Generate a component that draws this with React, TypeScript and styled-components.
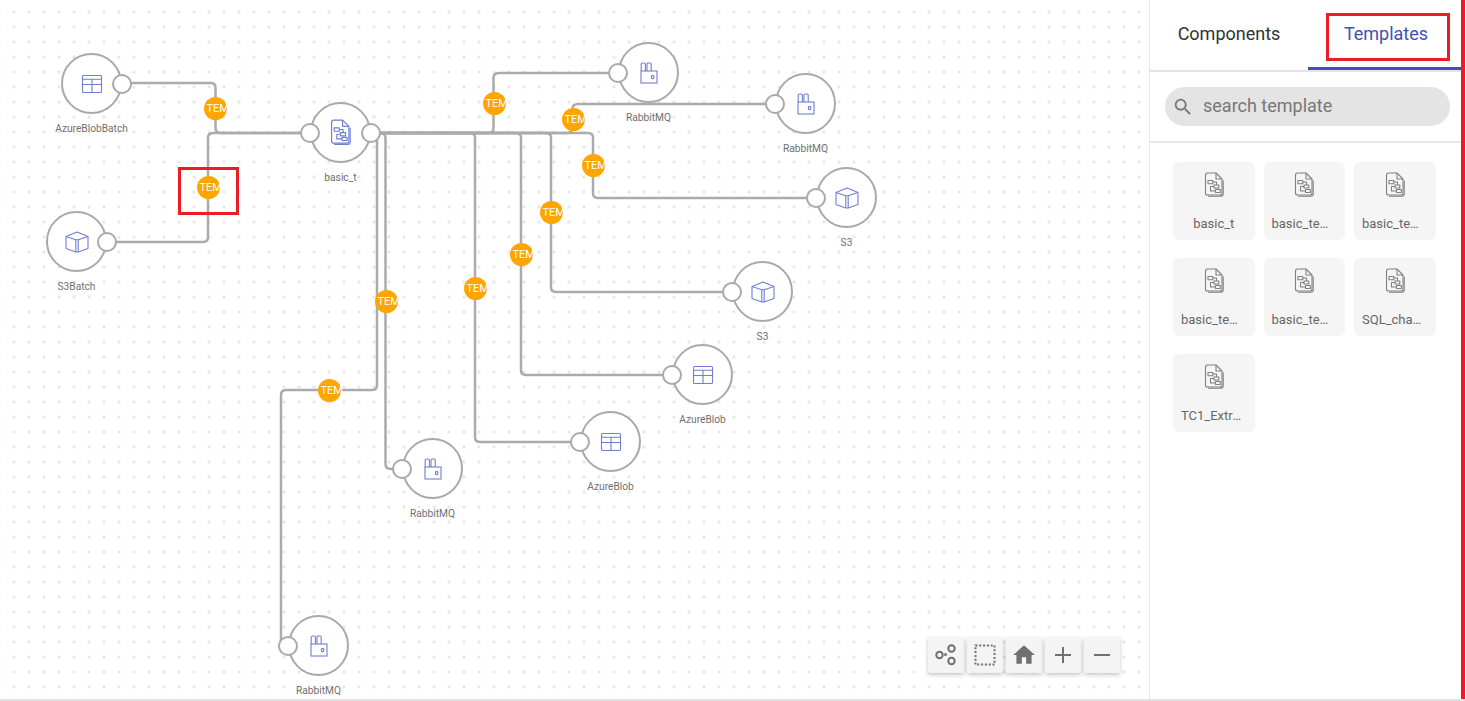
import React from 'react';
import styled, { createGlobalStyle } from 'styled-components';

type NodeKind = 'table' | 'cube' | 'rabbit' | 'flow';

interface FlowNode {
  x: number;
  y: number;
  label: string;
  kind: NodeKind;
  port: 'in' | 'out' | 'both';
}

const NODES: FlowNode[] = [
  { x: 91, y: 84, label: 'AzureBlobBatch', kind: 'table', port: 'out' },
  { x: 76, y: 242, label: 'S3Batch', kind: 'cube', port: 'out' },
  { x: 340, y: 133, label: 'basic_t', kind: 'flow', port: 'both' },
  { x: 648, y: 73, label: 'RabbitMQ', kind: 'rabbit', port: 'in' },
  { x: 805, y: 104, label: 'RabbitMQ', kind: 'rabbit', port: 'in' },
  { x: 846, y: 198, label: 'S3', kind: 'cube', port: 'in' },
  { x: 762, y: 292, label: 'S3', kind: 'cube', port: 'in' },
  { x: 702, y: 375, label: 'AzureBlob', kind: 'table', port: 'in' },
  { x: 610, y: 442, label: 'AzureBlob', kind: 'table', port: 'in' },
  { x: 432, y: 469, label: 'RabbitMQ', kind: 'rabbit', port: 'in' },
  { x: 318, y: 646, label: 'RabbitMQ', kind: 'rabbit', port: 'in' },
];

const EDGES = [
  'M121 83 H211 Q215.5 83 215.5 88 V128 Q215.5 133 221 133 H310',
  'M106 242 H203 Q208 242 208 237 V138 Q208 133 213 133 H310',
  'M370 133 H488 Q493.5 133 493.5 128 V78 Q493.5 73 499 73 H618',
  'M370 133 H567 Q572.5 133 572.5 128 V109 Q572.5 104 578 104 H775',
  'M370 133 H588 Q593 133 593 138 V193 Q593 198 598 198 H816',
  'M370 133 H546 Q551 133 551 138 V287 Q551 292 556 292 H732',
  'M370 133 H516 Q521 133 521 138 V370 Q521 375 526 375 H672',
  'M370 133 H470 Q475 133 475 138 V437 Q475 442 480 442 H580',
  'M370 133 H380 Q385.5 133 385.5 138 V464 Q385.5 469 391 469 H402',
  'M370 133 Q377 133 377 138 V385 Q377 390 372 390 H286 Q281 390 281 395 V641 Q281 646 286 646 H288',
];

const BADGES = [
  [215, 108],
  [208, 187],
  [494, 103],
  [573, 119],
  [593, 165],
  [551, 212],
  [521, 254],
  [475, 288],
  [386, 301],
  [329, 390],
];

const TEMPLATES = ['basic_t', 'basic_temp1', 'basic_temp2', 'basic_temp3', 'basic_temp4', 'SQL_change', 'TC1_Extract'];

const GlobalStyle = createGlobalStyle`
  html, body {
    margin: 0;
    padding: 0;
    height: 100%;
    overflow: hidden;
    background: #fff;
    font-family: Roboto, "Liberation Sans", sans-serif;
  }
`;

const Page = styled.div`
  display: flex;
  width: 1465px;
  height: 701px;
  box-sizing: border-box;
  border-bottom: 2px solid #e3e3e3;
  overflow: hidden;
`;

const Canvas = styled.div`
  position: relative;
  flex: 1;
  background-color: #fff;
  background-image: radial-gradient(circle at center, #e4e4e4 1.3px, transparent 1.6px);
  background-size: 15px 15px;
  background-position: 6.5px 4.5px;
`;

const EdgeLayer = styled.svg`
  position: absolute;
  left: 0;
  top: 0;
  width: 100%;
  height: 100%;
`;

const NodeWrap = styled.div<{ $x: number; $y: number }>`
  position: absolute;
  left: ${(p) => p.$x - 50}px;
  top: ${(p) => p.$y - 31}px;
  width: 101px;
  display: flex;
  flex-direction: column;
  align-items: center;
`;

const Circle = styled.div`
  position: relative;
  box-sizing: border-box;
  width: 61px;
  height: 61px;
  border: 2.5px solid #a9a9a9;
  border-radius: 50%;
  background: #fff;
  display: flex;
  align-items: center;
  justify-content: center;
`;

const Port = styled.span<{ $side: 'in' | 'out' }>`
  position: absolute;
  top: 50%;
  ${(p) => (p.$side === 'in' ? 'left: -12px;' : 'right: -12px;')}
  box-sizing: border-box;
  width: 20px;
  height: 20px;
  margin-top: -10px;
  border: 2.5px solid #a9a9a9;
  border-radius: 50%;
  background: #fff;
`;

const NodeLabel = styled.span`
  margin-top: 8px;
  font-size: 10.2px;
  line-height: 14px;
  color: #707070;
  white-space: nowrap;
`;

const Badge = styled.div<{ $x: number; $y: number }>`
  position: absolute;
  left: ${(p) => p.$x - 11.5}px;
  top: ${(p) => p.$y - 11.5}px;
  width: 23px;
  height: 23px;
  border-radius: 50%;
  background: #ffa500;
  color: #fff;
  font-size: 11px;
  line-height: 23px;
  padding-left: 3px;
  box-sizing: border-box;
  white-space: nowrap;
`;

const Highlight = styled.div`
  position: absolute;
  left: 178px;
  top: 167px;
  width: 61px;
  height: 48px;
  box-sizing: border-box;
  border: 3px solid #ed1c24;
`;

const Toolbar = styled.div`
  position: absolute;
  right: 29px;
  bottom: 26px;
  display: flex;
  gap: 3px;
`;

const ToolButton = styled.button`
  width: 36px;
  height: 36px;
  padding: 0;
  border: 0;
  border-radius: 2px;
  background: #f4f4f4;
  box-shadow: 0 2px 4px rgba(0, 0, 0, 0.22);
  display: flex;
  align-items: center;
  justify-content: center;
`;

const Sidebar = styled.aside`
  width: 316px;
  box-sizing: border-box;
  border-left: 1px solid #e6e6e6;
  border-right: 4px solid #ed1c24;
  background: #fff;
  display: flex;
  flex-direction: column;
`;

const Tabs = styled.div`
  display: flex;
  height: 72px;
  box-sizing: border-box;
  border-bottom: 2px solid #e4e4e4;
`;

const Tab = styled.div<{ $active?: boolean }>`
  position: relative;
  flex: ${(p) => (p.$active ? '1' : '0 0 158px')};
  height: 70px;
  box-sizing: border-box;
  padding-left: ${(p) => (p.$active ? '3px' : '0')};
  display: flex;
  align-items: center;
  justify-content: center;
  font-size: 18px;
  color: ${(p) => (p.$active ? '#3f51b5' : '#333')};
  border-bottom: 3px solid ${(p) => (p.$active ? '#3f51b5' : 'transparent')};
`;

const TabHighlight = styled.div`
  position: absolute;
  left: 18px;
  top: 13px;
  width: 124px;
  height: 48px;
  box-sizing: border-box;
  border: 3px solid #ed1c24;
`;

const SearchRow = styled.div`
  padding: 15px 11px 15px 15px;
  border-bottom: 2px solid #e8e8e8;
`;

const SearchBox = styled.div`
  height: 39px;
  border-radius: 20px;
  background: #e4e4e4;
  display: flex;
  align-items: center;
  padding-left: 7px;
  gap: 9px;
`;

const SearchIcon = styled.svg`
  margin-top: 1px;
`;

const SearchText = styled.span`
  margin-bottom: 2px;
  font-size: 18px;
  color: #777;
`;

const TemplateGrid = styled.div`
  display: grid;
  grid-template-columns: repeat(3, 81.5px);
  grid-auto-rows: 78px;
  column-gap: 9px;
  row-gap: 18px;
  padding: 19px 0 0 23px;
`;

const TemplateCard = styled.div`
  background: #f5f5f5;
  border-radius: 6px;
  box-sizing: border-box;
  padding: 10px 8px 0;
  display: flex;
  flex-direction: column;
  align-items: center;
`;

const TemplateName = styled.span`
  width: 100%;
  margin-top: 18px;
  font-size: 13px;
  line-height: 18px;
  color: #666;
  text-align: center;
  white-space: nowrap;
  overflow: hidden;
  text-overflow: ellipsis;
`;

const TableIcon = () => (
  <svg width="22" height="20" viewBox="0 0 22 20" fill="none" stroke="#6f7fd0" strokeWidth="1.1">
    <rect x="1.5" y="1.5" width="19" height="17" rx="1" />
    <path d="M1.5 5.2H20.5M1.5 10.5H20.5M11 5.2V18.5" />
  </svg>
);

const CubeIcon = () => (
  <svg width="24" height="22" viewBox="0 0 24 22" fill="none" stroke="#6f7fd0" strokeWidth="1.1" strokeLinejoin="round">
    <path d="M12 1L23 5.5V17.5L13.2 21H10.8L1 17.5V5.5Z" />
    <path d="M1 5.5L10.8 8.8V21M23 5.5L13.2 8.8V21M10.8 8.8H13.2" />
  </svg>
);

const RabbitIcon = () => (
  <svg width="18" height="22" viewBox="0 0 18 22" fill="none" stroke="#6f7fd0" strokeWidth="1.1">
    <rect x="1" y="9" width="16" height="12" />
    <path d="M1.2 9V2.2Q1.2 1 2.4 1H4.2Q5.4 1 5.4 2.2V9M7 9V2.2Q7 1 8.2 1H10Q11.2 1 11.2 2.2V9" />
    <rect x="11.4" y="13.6" width="2.4" height="3" rx="0.8" />
  </svg>
);

const FlowIcon = ({ color, size }: { color: string; size: number }) => (
  <svg width={size} height={size * 1.25} viewBox="0 0 20 25" fill="none" stroke={color} strokeWidth="1.1" strokeLinejoin="round">
    <path d="M1.5 3.5Q1.5 1 3.5 1H12L18 7V21Q18 23 16 23H3.5Q1.5 23 1.5 21Z" />
    <path d="M12 1V7H18" />
    <path d="M19.2 8.5V22Q19.2 24.2 17 24.2H4" />
    <rect x="4" y="8.5" width="4.8" height="3.2" />
    <rect x="10" y="13" width="4.8" height="3" />
    <rect x="11.5" y="17.5" width="4.8" height="3" />
    <path d="M8.8 10H12.5V13M10 14.5H6.5V19H11.5" />
  </svg>
);

const NodeIcon = ({ kind }: { kind: NodeKind }) => {
  if (kind === 'table') return <TableIcon />;
  if (kind === 'cube') return <CubeIcon />;
  if (kind === 'rabbit') return <RabbitIcon />;
  return <FlowIcon color="#6f7fd0" size={21} />;
};

const App: React.FC = () => (
  <Page>
    <GlobalStyle />
    <Canvas>
      <EdgeLayer>
        {EDGES.map((d) => (
          <path key={d} d={d} fill="none" stroke="#ababab" strokeWidth="2.5" />
        ))}
      </EdgeLayer>
      {NODES.map((node) => (
        <NodeWrap key={`${node.label}-${node.x}`} $x={node.x} $y={node.y}>
          <Circle>
            <NodeIcon kind={node.kind} />
            {node.port !== 'out' && <Port $side="in" />}
            {node.port !== 'in' && <Port $side="out" />}
          </Circle>
          <NodeLabel>{node.label}</NodeLabel>
        </NodeWrap>
      ))}
      {BADGES.map(([x, y]) => (
        <Badge key={`${x}-${y}`} $x={x} $y={y}>
          TEM
        </Badge>
      ))}
      <Highlight />
      <Toolbar>
        <ToolButton>
          <svg width="24" height="24" viewBox="0 0 24 24" fill="none" stroke="#707070" strokeWidth="2">
            <circle cx="5.5" cy="12" r="3.2" />
            <circle cx="17.5" cy="5.5" r="3.2" />
            <circle cx="17.5" cy="18" r="3.2" />
            <circle cx="11.5" cy="11.5" r="0.6" />
          </svg>
        </ToolButton>
        <ToolButton>
          <svg width="24" height="24" viewBox="0 0 24 24" fill="none" stroke="#707070" strokeWidth="2" strokeDasharray="2 1.8">
            <rect x="2.5" y="2.5" width="19" height="19" />
          </svg>
        </ToolButton>
        <ToolButton>
          <svg width="26" height="26" viewBox="0 0 24 24" fill="#707070">
            <path d="M10 20v-6h4v6h5v-8h3L12 3 2 12h3v8z" />
          </svg>
        </ToolButton>
        <ToolButton>
          <svg width="20" height="20" viewBox="0 0 20 20" stroke="#707070" strokeWidth="2">
            <path d="M2 10H18M10 2V18" />
          </svg>
        </ToolButton>
        <ToolButton>
          <svg width="20" height="20" viewBox="0 0 20 20" stroke="#707070" strokeWidth="2">
            <path d="M2 10H18" />
          </svg>
        </ToolButton>
      </Toolbar>
    </Canvas>
    <Sidebar>
      <Tabs>
        <Tab>Components</Tab>
        <Tab $active>
          Templates
          <TabHighlight />
        </Tab>
      </Tabs>
      <SearchRow>
        <SearchBox>
          <SearchIcon width="22" height="22" viewBox="0 0 24 24" fill="#777">
            <path d="M15.5 14h-.79l-.28-.27A6.47 6.47 0 0 0 16 9.5 6.5 6.5 0 1 0 9.5 16c1.61 0 3.09-.59 4.23-1.57l.27.28v.79l5 4.99L20.49 19l-4.99-5zm-6 0C7.01 14 5 11.99 5 9.5S7.01 5 9.5 5 14 7.01 14 9.5 11.99 14 9.5 14z" />
          </SearchIcon>
          <SearchText>search template</SearchText>
        </SearchBox>
      </SearchRow>
      <TemplateGrid>
        {TEMPLATES.map((name) => (
          <TemplateCard key={name}>
            <FlowIcon color="#808080" size={20} />
            <TemplateName>{name}</TemplateName>
          </TemplateCard>
        ))}
      </TemplateGrid>
    </Sidebar>
  </Page>
);

export default App;
